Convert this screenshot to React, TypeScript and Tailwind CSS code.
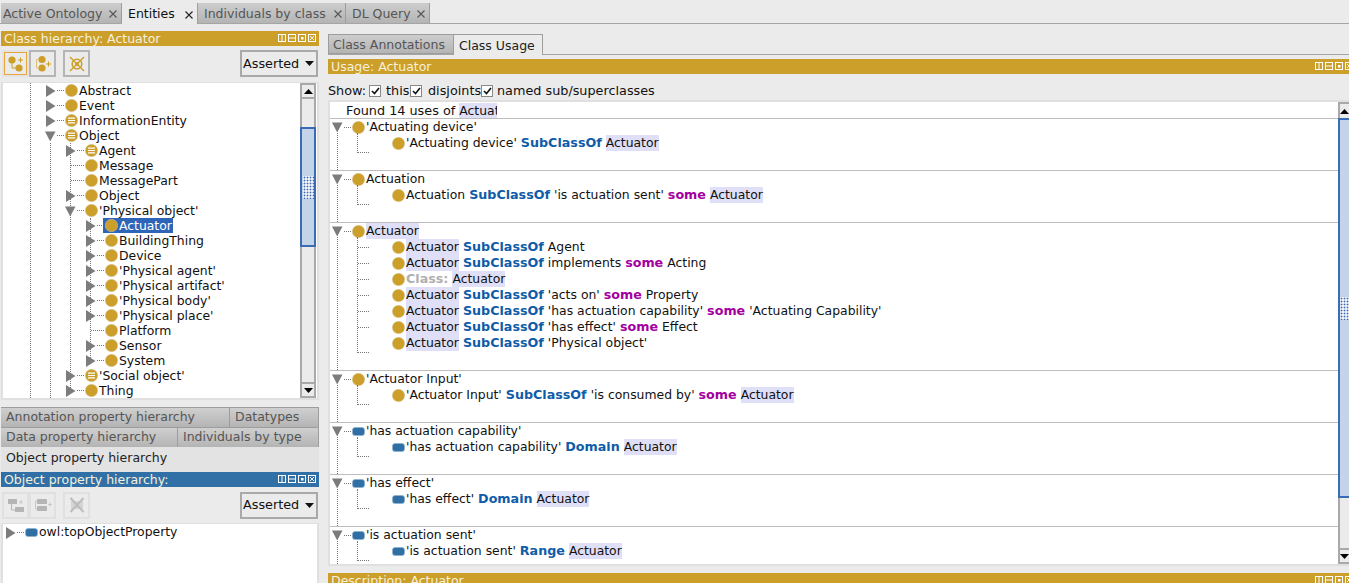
import React from 'react';

const GOLD = '#cc9f2a';

const Triangle = ({ open }: { open?: boolean }) => (
  <svg width="11" height="12" viewBox="0 0 11 12" className="shrink-0">
    {open ? <path d="M0 1.5h10.5L5.2 11.5z" fill="#7c7c7c" /> : <path d="M1 0v12l9.5-6z" fill="#7c7c7c" />}
  </svg>
);

const ClassDot = ({ defined }: { defined?: boolean }) => (
  <svg width="13" height="13" viewBox="0 0 13 13" className="shrink-0">
    <circle cx="6.5" cy="6.5" r="6.2" fill="#cc9f2a" stroke="#d8cba6" strokeWidth="0.5" />
    {defined && <path d="M3 4.2h7M3 6.5h7M3 8.8h7" stroke="#fff" strokeWidth="1.2" />}
  </svg>
);

const PropDot = () => (
  <svg width="13" height="9" viewBox="0 0 13 9" className="shrink-0">
    <rect x="0.5" y="0.5" width="12" height="8" rx="2.5" fill="#2f6fa5" stroke="#8fb0cc" strokeWidth="0.7" />
  </svg>
);

const ViewButtons = () => (
  <svg width="38" height="9" viewBox="0 0 38 9" className="shrink-0">
    <g fill="none" stroke="#fff">
      <rect x="0.5" y="0.5" width="7" height="7" />
      <path d="M4 0.5v7" />
      <rect x="10.5" y="0.5" width="7" height="7" />
      <path d="M10.5 4h7" />
      <rect x="20.5" y="0.5" width="7" height="7" />
      <rect x="23" y="3" width="2.5" height="2.5" fill="#fff" stroke="none" />
      <rect x="30.5" y="0.5" width="7" height="7" />
      <path d="M32 2l4 4M36 2l-4 4" strokeWidth="0.9" />
    </g>
  </svg>
);

const Header = ({ title, color, right }: { title: string; color: string; right?: boolean }) => (
  <div className="flex h-[15px] items-center justify-between pl-[3px] pr-[3px] text-[12.5px] leading-[15px] text-[#f6f0dc]" style={{ backgroundColor: color }}>
    <span>{title}</span>
    <span className={right ? '-mr-[7px]' : ''}>
      <ViewButtons />
    </span>
  </div>
);

const Select = () => (
  <div className="mr-[1px] flex h-[27px] w-[78px] items-center justify-between border-2 border-[#a9a9a9] bg-[#ebebeb] pl-[1px] pr-[1px] text-[12.8px] text-[#111]">
    <span>Asserted</span>
    <svg width="9" height="5" viewBox="0 0 9 5" className="mr-[1px]"><path d="M0 0h9L4.5 5z" fill="#111" /></svg>
  </div>
);

const ToolBtn = ({ children, on, dim, className }: { children: React.ReactNode; on?: boolean; dim?: boolean; className?: string }) => (
  <div className={`flex h-[27px] w-[27px] items-center justify-center border-2 ${on ? 'border-[#e4e4e4]' : dim ? 'border-[#e0e0e0]' : 'border-[#b5b5b5]'} ${className ?? ''}`}>
    {on ? <div className="flex h-full w-full items-center justify-center border border-[#e9a53a]">{children}</div> : children}
  </div>
);

const IconAddSub = () => (
  <svg width="18" height="18" viewBox="0 0 18 18">
    <circle cx="5" cy="5" r="3.6" fill={GOLD} />
    <circle cx="12" cy="13" r="3.6" fill={GOLD} />
    <path d="M5 8v5h4" stroke={GOLD} fill="none" />
    <path d="M11 5h5M13.5 2.5v5" stroke={GOLD} />
  </svg>
);

const IconAddSib = () => (
  <svg width="18" height="18" viewBox="0 0 18 18">
    <circle cx="8" cy="4.5" r="3.6" fill={GOLD} />
    <circle cx="8" cy="13" r="3.6" fill={GOLD} />
    <path d="M5 4.5H2.5v8.5H5" stroke="#dcc078" fill="none" />
    <path d="M12 9h5M14.5 6.5v5" stroke={GOLD} />
  </svg>
);

const IconDelete = () => (
  <svg width="18" height="18" viewBox="0 0 18 18">
    <circle cx="9" cy="9" r="4.8" fill="none" stroke={GOLD} strokeWidth="1.6" />
    <circle cx="9" cy="9" r="2" fill={GOLD} />
    <path d="M2 2l14 14M16 2L2 16" stroke={GOLD} strokeWidth="1.4" />
  </svg>
);

const IconPropDelete = () => (
  <svg width="18" height="18" viewBox="0 0 18 18">
    <rect x="3" y="5" width="12" height="8" fill="#d4d4d4" />
    <path d="M2.5 2l13 14M15.5 2l-13 14" stroke="#bcbcbc" strokeWidth="2" />
  </svg>
);

const IconPropSub = () => (
  <svg width="18" height="18" viewBox="0 0 18 18" fill="#b5b5b5">
    <rect x="1" y="3" width="9" height="5" rx="0.5" />
    <rect x="8" y="11" width="9" height="5" rx="0.5" />
    <path d="M4.5 8v6h4" stroke="#b5b5b5" fill="none" />
    <path d="M12 6h4M14 4v4" stroke="#c8c8c8" />
  </svg>
);

const IconPropSib = () => (
  <svg width="18" height="18" viewBox="0 0 18 18" fill="#b5b5b5">
    <rect x="3" y="3" width="10" height="5" rx="0.5" />
    <rect x="3" y="10" width="10" height="5" rx="0.5" />
    <path d="M3 5H1.5v8H3" stroke="#c8c8c8" fill="none" />
    <path d="M14 8.5h4M16 6.5v4" stroke="#c8c8c8" />
  </svg>
);

type TreeItem = { label: string; depth: number; arrow?: 'open' | 'closed'; defined?: boolean; selected?: boolean };

const treeItems: TreeItem[] = [
  { label: 'Abstract', depth: 0, arrow: 'closed' },
  { label: 'Event', depth: 0, arrow: 'closed' },
  { label: 'InformationEntity', depth: 0, arrow: 'closed', defined: true },
  { label: 'Object', depth: 0, arrow: 'open', defined: true },
  { label: 'Agent', depth: 1, arrow: 'closed', defined: true },
  { label: 'Message', depth: 1 },
  { label: 'MessagePart', depth: 1 },
  { label: 'Object', depth: 1, arrow: 'closed' },
  { label: "'Physical object'", depth: 1, arrow: 'open' },
  { label: 'Actuator', depth: 2, arrow: 'closed', selected: true },
  { label: 'BuildingThing', depth: 2, arrow: 'closed' },
  { label: 'Device', depth: 2, arrow: 'closed' },
  { label: "'Physical agent'", depth: 2, arrow: 'closed' },
  { label: "'Physical artifact'", depth: 2, arrow: 'closed' },
  { label: "'Physical body'", depth: 2, arrow: 'closed' },
  { label: "'Physical place'", depth: 2, arrow: 'closed' },
  { label: 'Platform', depth: 2 },
  { label: 'Sensor', depth: 2, arrow: 'closed' },
  { label: 'System', depth: 2, arrow: 'closed' },
  { label: "'Social object'", depth: 1, arrow: 'closed', defined: true },
  { label: 'Thing', depth: 1, arrow: 'closed' },
];

const depthPad = ['pl-[42px]', 'pl-[62px]', 'pl-[82px]'];

const TreeRow = ({ item }: { item: TreeItem }) => (
  <div className={`flex h-[15px] items-center text-[12.4px] leading-[15px] text-[#111] ${depthPad[item.depth]}`}>
    <span className="flex w-[11px] shrink-0 justify-center">
      {item.arrow ? <Triangle open={item.arrow === 'open'} /> : <span className="ml-[6px] w-[5px] border-t border-dotted border-[#777]" />}
    </span>
    <span className="mr-[1px] ml-[1px] w-[7px] shrink-0 border-t border-dotted border-[#777]" />
    {item.selected ? (
      <span className="-ml-[2px] flex h-[15px] items-center bg-[#2f65b8] pl-[2px] pr-[1px] text-white">
        <ClassDot />
        <span className="ml-[1px]">{item.label}</span>
      </span>
    ) : (
      <>
        <ClassDot defined={item.defined} />
        <span className="ml-[1px]">{item.label}</span>
      </>
    )}
  </div>
);

const Guide = ({ className }: { className: string }) => (
  <span className={`absolute w-0 border-l border-dotted border-[#777] ${className}`} />
);

const ScrollArrow = ({ down, className }: { down?: boolean; className?: string }) => (
  <div className={`flex shrink-0 items-center justify-center border-2 border-[#a9a9a9] bg-[#ebebeb] ${className ?? ''}`}>
    <svg width="9" height="5" viewBox="0 0 9 5">
      <path d={down ? 'M0 0h9L4.5 5z' : 'M0 5h9L4.5 0z'} fill="#000" />
    </svg>
  </div>
);

const Grip = ({ className }: { className?: string }) => (
  <div className={`h-[23px] bg-[radial-gradient(#3f69b3_0.8px,#eef2f8_1.1px)] bg-[length:3px_3px] ${className ?? ''}`} />
);

const LeftTab = ({ label, active, className }: { label: string; active?: boolean; className?: string }) => (
  <div className={`flex pl-[5px] text-[12.5px] ${active ? 'h-[25px] items-start bg-[#e3e3e3] pt-[2px] text-[#222]' : 'h-[20px] items-center border-r border-t border-[#9d9d9d] bg-gradient-to-b from-[#cfcfcf] to-[#b4b4b4] text-[#555]'} ${className ?? ''}`}>
    {label}
  </div>
);

const TopTab = ({ label, active, className }: { label: string; active?: boolean; className: string }) => (
  <div className={`flex items-center justify-between whitespace-nowrap border-r border-[#9d9d9d] pt-[2px] text-[12.5px] ${active ? 'h-[21px] bg-[#ebebeb] text-[#111]' : 'h-[20px] bg-gradient-to-b from-[#cdcdcd] to-[#b4b4b4] text-[#555]'} ${className}`}>
    <span>{label}</span>
    <svg width="8" height="8" viewBox="0 0 8 8"><path d="M0.5 0.5l7 7M7.5 0.5l-7 7" stroke={active ? '#222' : '#555'} strokeWidth="1.1" /></svg>
  </div>
);

type Seg = { t: string; k?: 'kw' | 'some' | 'cls' | 'hl' };
type Axiom = { dot: 'class' | 'prop'; segs: Seg[] };
type Group = { dot: 'class' | 'prop'; title: Seg[]; rows: Axiom[] };

const A: Seg = { t: 'Actuator', k: 'hl' };
const sub: Seg = { t: 'SubClassOf', k: 'kw' };
const some: Seg = { t: 'some', k: 'some' };

const groups: Group[] = [
  {
    dot: 'class',
    title: [{ t: "'Actuating device'" }],
    rows: [{ dot: 'class', segs: [{ t: "'Actuating device'" }, sub, A] }],
  },
  {
    dot: 'class',
    title: [{ t: 'Actuation' }],
    rows: [{ dot: 'class', segs: [{ t: 'Actuation' }, sub, { t: "'is actuation sent'" }, some, A] }],
  },
  {
    dot: 'class',
    title: [{ t: 'Actuator', k: 'hl' }],
    rows: [
      { dot: 'class', segs: [A, sub, { t: 'Agent' }] },
      { dot: 'class', segs: [A, sub, { t: 'implements' }, some, { t: 'Acting' }] },
      { dot: 'class', segs: [{ t: 'Class:', k: 'cls' }, A] },
      { dot: 'class', segs: [A, sub, { t: "'acts on'" }, some, { t: 'Property' }] },
      { dot: 'class', segs: [A, sub, { t: "'has actuation capability'" }, some, { t: "'Actuating Capability'" }] },
      { dot: 'class', segs: [A, sub, { t: "'has effect'" }, some, { t: 'Effect' }] },
      { dot: 'class', segs: [A, sub, { t: "'Physical object'" }] },
    ],
  },
  {
    dot: 'class',
    title: [{ t: "'Actuator Input'" }],
    rows: [{ dot: 'class', segs: [{ t: "'Actuator Input'" }, sub, { t: "'is consumed by'" }, some, A] }],
  },
  {
    dot: 'prop',
    title: [{ t: "'has actuation capability'" }],
    rows: [{ dot: 'prop', segs: [{ t: "'has actuation capability'" }, { t: 'Domain', k: 'kw' }, A] }],
  },
  {
    dot: 'prop',
    title: [{ t: "'has effect'" }],
    rows: [{ dot: 'prop', segs: [{ t: "'has effect'" }, { t: 'Domain', k: 'kw' }, A] }],
  },
  {
    dot: 'prop',
    title: [{ t: "'is actuation sent'" }],
    rows: [{ dot: 'prop', segs: [{ t: "'is actuation sent'" }, { t: 'Range', k: 'kw' }, A] }],
  },
];

const SegText = ({ seg }: { seg: Seg }) => {
  if (seg.k === 'kw') return <span className="text-[12.7px] font-bold text-[#0f5ca8]">{seg.t}</span>;
  if (seg.k === 'some') return <span className="text-[12.7px] font-bold text-[#a3009f]">{seg.t}</span>;
  if (seg.k === 'cls') return <span className="text-[12.7px] font-bold text-[#b0b0b0]">{seg.t}</span>;
  if (seg.k === 'hl') return <span className="bg-[#dfdff8]">{seg.t}</span>;
  return <span>{seg.t}</span>;
};

const Dot = ({ type }: { type: 'class' | 'prop' }) => (
  <span className="flex w-[13px] shrink-0 justify-center">{type === 'class' ? <ClassDot /> : <PropDot />}</span>
);

const UsageGroup = ({ group }: { group: Group }) => (
  <div className="relative border-t border-[#bdbdbd] pb-[19px]">
    <Guide className="left-[7px] top-[14px] bottom-0" />
    <div className="flex h-[16px] items-center pl-[2px] text-[12.4px] leading-[16px] text-[#111]">
      <span className="flex w-[11px] shrink-0 justify-center"><Triangle open /></span>
      <span className="ml-[1px] mr-[1px] w-[7px] shrink-0 border-t border-dotted border-[#777]" />
      <Dot type={group.dot} />
      <span className="ml-[1px] flex gap-[4px]">{group.title.map((s, i) => <SegText key={i} seg={s} />)}</span>
    </div>
    <div className="relative">
      <span className="absolute left-[27px] -top-[2px] w-[12px] border-b border-l border-dotted border-[#777]" style={{ height: group.rows.length * 16 + 4 }} />
      {group.rows.map((row, i) => (
        <div key={i} className="relative flex h-[16px] items-center pl-[62px] text-[12.4px] leading-[16px] text-[#111]">
          {i < group.rows.length - 1 && <span className="absolute left-[28px] top-[8px] w-[11px] border-t border-dotted border-[#777]" />}
          <Dot type={row.dot} />
          <span className="ml-[1px] flex gap-[4px] whitespace-pre">{row.segs.map((s, j) => <SegText key={j} seg={s} />)}</span>
        </div>
      ))}
    </div>
  </div>
);

function Check() {
  return (
    <span className="flex h-[12px] w-[12px] shrink-0 items-center justify-center border border-[#888] bg-white">
      <svg width="9" height="8" viewBox="0 0 9 8"><path d="M1 4l2.5 2.5L8 1" fill="none" stroke="#111" strokeWidth="1.6" /></svg>
    </span>
  );
}

export default function App() {
  return (
    <div className="flex h-[583px] w-[1349px] flex-col overflow-hidden bg-[#ebebeb] font-['DejaVu_Sans',sans-serif]">
      {/* top tabs */}
      <div className="flex h-[24px] shrink-0 items-start border-b border-[#a5a5a5] bg-[#ebebeb] pl-[1px] pt-[3px]">
        <TopTab label="Active Ontology" className="w-[121px] pl-[2px] pr-[4px]" />
        <TopTab label="Entities" active className="w-[76px] pl-[6px] pr-[4px]" />
        <TopTab label="Individuals by class" className="w-[148px] pl-[6px] pr-[3px]" />
        <TopTab label="DL Query" className="w-[84px] pl-[6px] pr-[4px]" />
      </div>

      <div className="flex min-h-0 flex-1">
        {/* left column */}
        <div className="flex w-[319px] shrink-0 flex-col pl-[1px] pt-[7px]">
          <Header title="Class hierarchy: Actuator" color={GOLD} />
          <div className="flex h-[36px] shrink-0 items-start pl-[1px] pt-[4px]">
            <ToolBtn on><IconAddSub /></ToolBtn>
            <ToolBtn><IconAddSib /></ToolBtn>
            <ToolBtn className="ml-[7px]"><IconDelete /></ToolBtn>
            <div className="ml-auto"><Select /></div>
          </div>
          <div className="flex h-[318px] shrink-0 border-x-2 border-b-2 border-t border-[#e0e0e0] bg-white">
            <div className="relative min-w-0 flex-1 overflow-hidden">
              <Guide className="left-[27px] top-0 bottom-0" />
              <Guide className="left-[47px] top-[60px] bottom-0" />
              <Guide className="left-[67px] top-[60px] h-[247px]" />
              <Guide className="left-[87px] top-[135px] h-[142px]" />
              {treeItems.map((item, i) => (
                <TreeRow key={i} item={item} />
              ))}
            </div>
            <div className="mr-[1px] flex w-[16px] shrink-0 flex-col border-x-2 border-[#a9a9a9] bg-[#ebebeb]">
              <ScrollArrow className="-mx-[2px] h-[16px]" />
              <div className="flex-1">
                <div className="-mx-[2px] mt-[28px] flex h-[120px] items-center justify-center border-2 border-[#3a6cb5] bg-[#c3d3e8]">
                  <Grip className="w-[11px]" />
                </div>
              </div>
              <ScrollArrow down className="-mx-[2px] h-[16px]" />
            </div>
          </div>

          <div className="mt-[7px] flex shrink-0 flex-col">
            <div className="flex">
              <LeftTab label="Annotation property hierarchy" className="w-[229px]" />
              <LeftTab label="Datatypes" className="flex-1" />
            </div>
            <div className="flex">
              <LeftTab label="Data property hierarchy" className="w-[177px]" />
              <LeftTab label="Individuals by type" className="flex-1" />
            </div>
            <LeftTab label="Object property hierarchy" active />
          </div>

          <Header title="Object property hierarchy:" color="#3070a6" />
          <div className="flex h-[36px] shrink-0 items-center pl-[1px]">
            <ToolBtn dim><IconPropSub /></ToolBtn>
            <ToolBtn dim><IconPropSib /></ToolBtn>
            <ToolBtn dim className="ml-[7px]"><IconPropDelete /></ToolBtn>
            <div className="ml-auto"><Select /></div>
          </div>
          <div className="min-h-0 flex-1 border-x-2 border-t border-[#e0e0e0] bg-white pl-[2px] pt-[1px]">
            <div className="flex h-[15px] items-center text-[12.4px] text-[#111]">
              <span className="flex w-[11px] shrink-0 justify-center"><Triangle /></span>
              <span className="ml-[1px] mr-[1px] w-[7px] shrink-0 border-t border-dotted border-[#777]" />
              <PropDot />
              <span className="ml-[1px]">owl:topObjectProperty</span>
            </div>
          </div>
        </div>

        {/* right column */}
        <div className="ml-[9px] flex min-w-0 flex-1 flex-col pt-[10px]">
          <div className="flex h-[21px] shrink-0 items-start border-b border-[#a5a5a5]">
            <div className="flex h-[20px] w-[126px] items-center border border-[#9d9d9d] bg-gradient-to-b from-[#cdcdcd] to-[#b4b4b4] pl-[4px] pt-[2px] text-[12.5px] text-[#555]">Class Annotations</div>
            <div className="flex h-[21px] w-[89px] items-center border-r border-t border-[#9d9d9d] bg-[#ebebeb] pl-[5px] pt-[2px] text-[12.5px] text-[#222]">Class Usage</div>
          </div>
          <div className="mt-[4px] shrink-0">
            <Header title="Usage: Actuator" color={GOLD} right />
          </div>
          <div className="flex h-[26px] shrink-0 items-center pt-[8px] text-[12.8px] text-[#111]">
            <span className="w-[41px]">Show:</span>
            <Check />
            <span className="ml-[5px] w-[24px]">this</span>
            <Check />
            <span className="ml-[6px] w-[53px]">disjoints</span>
            <Check />
            <span className="ml-[4px]">named sub/superclasses</span>
          </div>
          <div className="flex h-[466px] shrink-0 border-y-2 border-l-2 border-[#e0e0e0] bg-white">
            <div className="min-w-0 flex-1 overflow-hidden">
              <div className="flex h-[16px] items-center pl-[16px] pt-[1px] text-[12.8px] text-[#111]">
                <span className="w-[151px] overflow-hidden whitespace-pre">Found 14 uses of <span className="bg-[#dfdff8] text-[12.4px]">Actuator</span></span>
              </div>
              {groups.map((g, i) => (
                <UsageGroup key={i} group={g} />
              ))}
            </div>
            <div className="flex w-[11px] shrink-0 flex-col border-l-2 border-[#a9a9a9] bg-[#ebebeb]">
              <ScrollArrow className="-ml-[2px] h-[16px] border-r-0 border-b-0" />
              <div className="min-h-0 flex-1">
                <div className="-ml-[2px] flex h-[380px] items-center justify-center border-y-2 border-l-2 border-[#3a6cb5] bg-[#c3d3e8]">
                  <Grip className="w-full" />
                </div>
              </div>
              <ScrollArrow down className="-ml-[2px] h-[16px] border-r-0" />
            </div>
          </div>
          <div className="mt-[7px] shrink-0">
            <Header title="Description: Actuator" color={GOLD} right />
          </div>
        </div>
      </div>
    </div>
  );
}
